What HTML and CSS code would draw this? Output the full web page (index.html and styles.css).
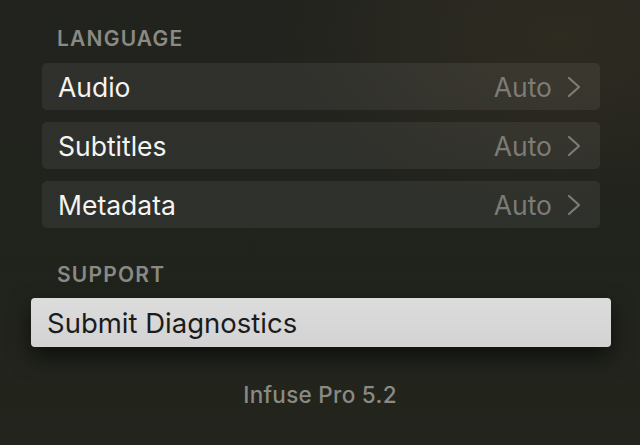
FILE: index.html
```html
<!DOCTYPE html>
<html>
<head>
<meta charset="utf-8">
<link rel="stylesheet" href="styles.css">
</head>
<body>
<div class="screen">
  <div class="section-label lang">LANGUAGE</div>
  <div class="list">
    <div class="row"><span class="title">Audio</span><span class="value">Auto<svg class="chev" viewBox="0 0 14 22" width="14" height="22"><path d="M2 2 L12 11 L2 20" fill="none" stroke="currentColor" stroke-width="2.2" stroke-linecap="round" stroke-linejoin="round"/></svg></span></div>
    <div class="row"><span class="title">Subtitles</span><span class="value">Auto<svg class="chev" viewBox="0 0 14 22" width="14" height="22"><path d="M2 2 L12 11 L2 20" fill="none" stroke="currentColor" stroke-width="2.2" stroke-linecap="round" stroke-linejoin="round"/></svg></span></div>
    <div class="row"><span class="title">Metadata</span><span class="value">Auto<svg class="chev" viewBox="0 0 14 22" width="14" height="22"><path d="M2 2 L12 11 L2 20" fill="none" stroke="currentColor" stroke-width="2.2" stroke-linecap="round" stroke-linejoin="round"/></svg></span></div>
  </div>
  <div class="section-label support">SUPPORT</div>
  <div class="focused">Submit Diagnostics</div>
  <div class="version">Infuse Pro 5.2</div>
</div>
</body>
</html>
```
FILE: styles.css
```css
html, body {
  margin: 0;
  padding: 0;
}
body {
  width: 640px;
  height: 445px;
  overflow: hidden;
  font-family: Inter, "Noto Sans", sans-serif;
}
.screen {
  width: 640px;
  height: 445px;
  box-sizing: border-box;
  padding: 27px 0 0 0;
  background:
    radial-gradient(ellipse 420px 260px at 560px 40px, rgba(70,58,40,0.35), rgba(0,0,0,0) 70%),
    linear-gradient(180deg, #22231e 0%, #20221c 60%, #23251d 100%);
  display: flex;
  flex-direction: column;
}
.section-label {
  margin-left: 57px;
  font-size: 21px;
  font-weight: 600;
  letter-spacing: 1.2px;
  color: #8a8a84;
  line-height: 24px;
}
.list {
  margin: 12px 40px 0 42px;
  display: flex;
  flex-direction: column;
  gap: 12px;
}
.row {
  height: 47px;
  border-radius: 5px;
  background: rgba(255,255,255,0.065);
  display: flex;
  align-items: center;
  justify-content: space-between;
  padding: 0 19px 0 16px;
}
.title {
  color: #f4f4f2;
  font-size: 26.5px;
  font-weight: 400;
}
.value {
  color: #7c7c76;
  font-size: 26.5px;
  display: flex;
  align-items: center;
  gap: 15px;
}
.chev {
  display: block;
}
.support {
  margin-top: 35px;
}
.focused {
  margin: 11px 29px 0 31px;
  height: 49px;
  border-radius: 4px;
  background: linear-gradient(180deg, #dcdcdc 0%, #d3d3d3 100%);
  box-shadow: 0 10px 22px rgba(0,0,0,0.55);
  color: #1b1b1b;
  font-size: 27.5px;
  display: flex;
  align-items: center;
  padding-left: 16px;
}
.version {
  margin-top: 34px;
  text-align: center;
  color: #8a8a84;
  font-size: 22.5px;
  font-weight: 500;
  letter-spacing: 0.3px;
}
```
